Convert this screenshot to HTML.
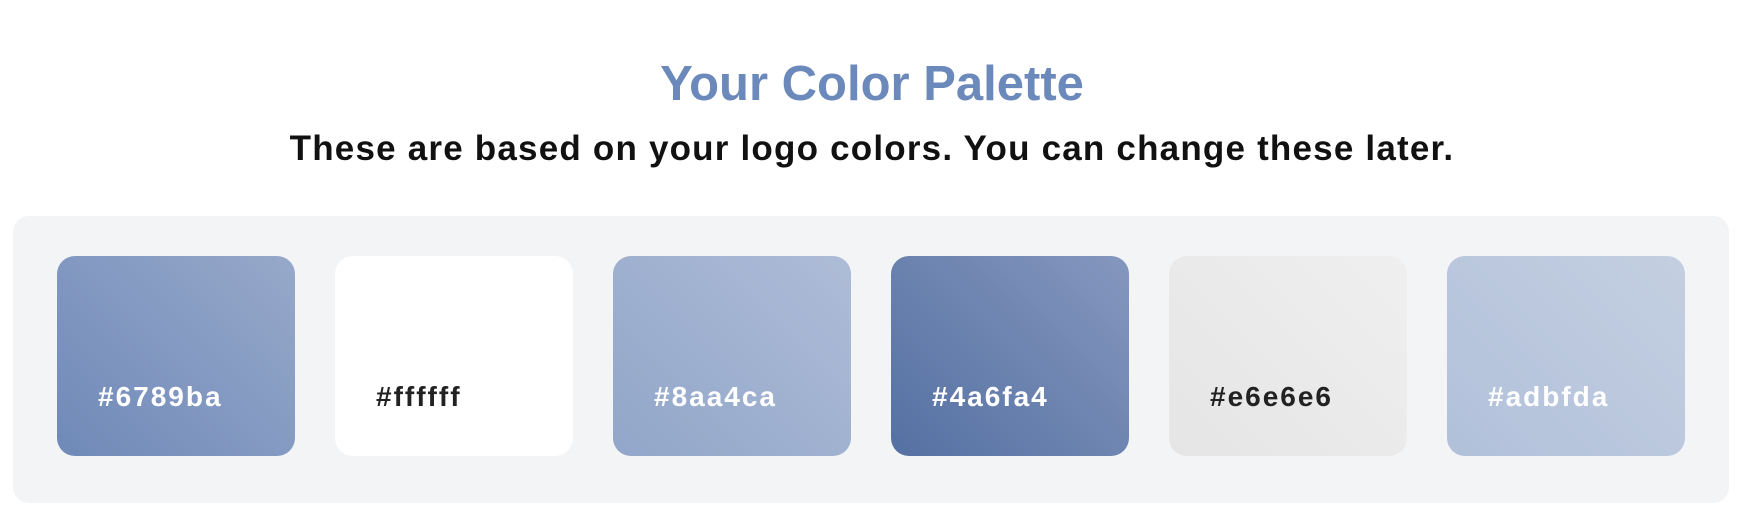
<!DOCTYPE html>
<html><head><style>
html,body{margin:0;padding:0;background:#fff;width:1744px;height:520px;overflow:hidden;font-family:"Liberation Sans",sans-serif;}
h1{position:absolute;top:56px;left:0;width:1744px;text-align:center;margin:0;font-size:49px;font-weight:bold;color:#6b89ba;letter-spacing:0;}
h2{position:absolute;top:129px;left:0;width:1744px;text-align:center;margin:0;font-size:35px;font-weight:bold;color:#111;letter-spacing:1.2px;}
.box{position:absolute;left:13px;top:216px;width:1716px;height:287px;background:#f3f4f6;border-radius:16px;}
.sw{position:absolute;top:256px;width:238px;height:200px;border-radius:18px;}
.sw span{position:absolute;left:41px;top:125px;font-size:28px;font-weight:bold;color:#fff;letter-spacing:2px;}
</style></head><body>
<h1>Your Color Palette</h1>
<h2>These are based on your logo colors. You can change these later.</h2>
<div class="box"></div>
<div class="sw" style="left:57px;background:linear-gradient(45deg,#6f89b8,#97a9ca)"><span>#6789ba</span></div>
<div class="sw" style="left:335px;background:#fff"><span style="color:#222">#ffffff</span></div>
<div class="sw" style="left:613px;background:linear-gradient(45deg,#91a6c9,#aebcd7)"><span>#8aa4ca</span></div>
<div class="sw" style="left:891px;background:linear-gradient(45deg,#5470a2,#8597be)"><span>#4a6fa4</span></div>
<div class="sw" style="left:1169px;background:linear-gradient(45deg,#e5e5e5,#efefef)"><span style="color:#222">#e6e6e6</span></div>
<div class="sw" style="left:1447px;background:linear-gradient(45deg,#b1c0da,#c4cfe1)"><span>#adbfda</span></div>
</body></html>
